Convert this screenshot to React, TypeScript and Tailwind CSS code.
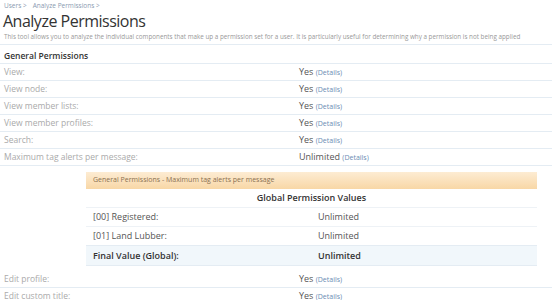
const rows = [
  { label: 'View:', value: 'Yes' },
  { label: 'View node:', value: 'Yes' },
  { label: 'View member lists:', value: 'Yes' },
  { label: 'View member profiles:', value: 'Yes' },
  { label: 'Search:', value: 'Yes' },
  { label: 'Maximum tag alerts per message:', value: 'Unlimited' },
]

const afterRows = [
  { label: 'Edit profile:', value: 'Yes' },
  { label: 'Edit custom title:', value: 'Yes' },
]

function PermRow({ label, value }: { label: string; value: string }) {
  return (
    <div className="flex items-center h-[17px] border-b border-[#e4ecf3]">
      <div className="w-[299px] pl-[4px] text-[8.5px] text-[#aaa]">{label}</div>
      <div className="text-[9px] text-[#555]">
        {value} <span className="text-[7px] text-[#6b8cb3]">(Details)</span>
      </div>
    </div>
  )
}

export default function App() {
  return (
    <div className="w-[552px] h-[300px] overflow-hidden bg-white font-['Open_Sans',sans-serif]">
      {/* Breadcrumb */}
      <div className="pl-[4px] pt-[1px] h-[10px] flex gap-[6px] text-[6.5px] leading-[10px] text-[#8a9ab0]">
        <span>Users &gt;</span>
        <span>Analyze Permissions &gt;</span>
      </div>

      {/* Title */}
      <h1 className="pl-[3px] text-[16px] tracking-[-0.5px] leading-[21px] text-[#333] mt-[1px]">Analyze Permissions</h1>
      <p className="pl-[4px] text-[6.3px] leading-[10px] text-[#999] whitespace-nowrap">
        This tool allows you to analyze the individual components that make up a permission set for a user. It is particularly useful for determining why a permission is not being applied
      </p>
      <div className="mt-[2px] border-b border-[#e4ecf3]" />

      {/* General Permissions */}
      <div className="mt-[5px] pl-[4px] h-[14px] flex items-center text-[8.5px] font-semibold text-[#333] border-b border-[#e4ecf3]">
        General Permissions
      </div>
      {rows.map((r) => (
        <PermRow key={r.label} label={r.label} value={r.value} />
      ))}

      {/* Detail panel */}
      <div className="pt-[6px] pb-[5px] pl-[86px] pr-[15px]">
        <div className="h-[17px] flex items-center pl-[7px] text-[7px] text-[#8a7050] bg-gradient-to-b from-[#fdecd3] to-[#f8d7a6]">
          General Permissions - Maximum tag alerts per message
        </div>
        <div className="h-[19px] flex items-center justify-center text-[9px] font-semibold text-[#333] border-b border-[#eef2f6]">
          Global Permission Values
        </div>
        <div className="flex items-center h-[19px] border-b border-[#eef2f6] text-[9px] text-[#555]">
          <div className="w-[232px] pl-[7px]">[00] Registered:</div>
          <div>Unlimited</div>
        </div>
        <div className="flex items-center h-[19px] border-b border-[#e4ecf3] text-[9px] text-[#555]">
          <div className="w-[232px] pl-[7px]">[01] Land Lubber:</div>
          <div>Unlimited</div>
        </div>
        <div className="flex items-center h-[20px] border-b border-[#e4ecf3] bg-[#f1f7fb] text-[9px] font-semibold text-[#333]">
          <div className="w-[232px] pl-[7px]">Final Value (Global):</div>
          <div>Unlimited</div>
        </div>
      </div>

      {afterRows.map((r) => (
        <PermRow key={r.label} label={r.label} value={r.value} />
      ))}
    </div>
  )
}
